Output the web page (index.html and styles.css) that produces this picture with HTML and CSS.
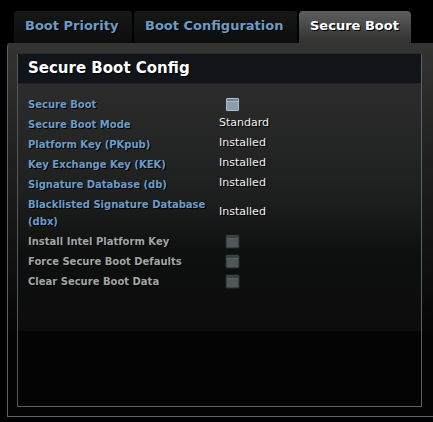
FILE: index.html
```html
<!DOCTYPE html>
<html>
<head>
<meta charset="utf-8">
<link rel="stylesheet" href="styles.css">
</head>
<body>
<div class="tabs">
  <div class="tab">Boot Priority</div>
  <div class="tab">Boot Configuration</div>
  <div class="tab active">Secure Boot</div>
</div>
<div class="panel">
  <div class="group">
    <div class="group-head">Secure Boot Config</div>
    <div class="group-body">
      <div class="row"><div class="label">Secure Boot</div><div class="value"><span class="check on"></span></div></div>
      <div class="row"><div class="label">Secure Boot Mode</div><div class="value">Standard</div></div>
      <div class="row"><div class="label">Platform Key (PKpub)</div><div class="value">Installed</div></div>
      <div class="row"><div class="label">Key Exchange Key (KEK)</div><div class="value">Installed</div></div>
      <div class="row"><div class="label">Signature Database (db)</div><div class="value">Installed</div></div>
      <div class="row tall"><div class="label">Blacklisted Signature Database (dbx)</div><div class="value">Installed</div></div>
      <div class="row dim"><div class="label">Install Intel Platform Key</div><div class="value"><span class="check"></span></div></div>
      <div class="row dim"><div class="label">Force Secure Boot Defaults</div><div class="value"><span class="check"></span></div></div>
      <div class="row dim"><div class="label">Clear Secure Boot Data</div><div class="value"><span class="check"></span></div></div>
    </div>
  </div>
</div>
</body>
</html>
```
FILE: styles.css
```css
html, body {
  margin: 0;
  padding: 0;
  background: #000;
  width: 433px;
  height: 422px;
  overflow: hidden;
  font-family: "DejaVu Sans", sans-serif;
}
.tabs {
  display: flex;
  gap: 2px;
  padding: 11px 0 0 14px;
  height: 32px;
}
.tab {
  height: 32px;
  box-sizing: border-box;
  padding: 0 0 0 11px;
  line-height: 30px;
  white-space: nowrap;
  font-weight: bold;
  font-size: 13px;
  letter-spacing: 0;
  color: #6f9bc3;
  background: linear-gradient(#161818, #0c0d0d);
  border-radius: 3px 3px 0 0;
  text-shadow: 1px 1px 0 #000;
}
.tab:nth-child(1) { width: 118px; }
.tab:nth-child(2) { width: 163px; }
.tab.active {
  width: 112px;
  color: #fff;
  background: linear-gradient(#5e5f5e, #3c3d3c 70%, #343532);
  border-radius: 4px 4px 0 0;
}
.panel {
  margin-left: 7px;
  width: 440px;
  box-sizing: border-box;
  padding: 10px 10px 9px 9px;
  background: linear-gradient(#343532 0px, #1e1f1e 120px, #0a0a0a 260px, #030403 297px);
  border-left: 1px solid #5b6267;
  border-bottom: 1px solid #5b6267;
  border-radius: 4px 0 0 0;
}
.group {
  width: 405px;
  box-sizing: border-box;
  border: 1px solid #444b50;
  border-top: 1px solid #2a2e31;
  border-left-color: #525a60;
  border-bottom-color: #5b6267;
  border-right-color: #5b6267;
  border-radius: 3px 3px 0 0;
  height: 354px;
  background: #030403;
}
.group-head {
  height: 29px;
  background: #111418;
  color: #fff;
  font-weight: bold;
  font-size: 15px;
  letter-spacing: 0;
  line-height: 29px;
  padding-left: 10px;
  text-shadow: 1px 1px 1px #000;
  border-bottom: 1px solid #1e2226;
}
.group-body {
  padding: 10px 0 40px 10px;
  background: linear-gradient(#2b2c2b, #1e1f1f 110px, #0e0f0f 170px, #0c0c0c);
}
.row {
  display: flex;
  align-items: center;
  min-height: 20px;
}
.row.tall {
  min-height: 37px;
}
.label {
  width: 191px;
  font-weight: bold;
  font-size: 10px;
  letter-spacing: 0;
  line-height: 17px;
  color: #6b9dca;
  text-shadow: 1px 1px 0 #000;
}
.row.dim .label { color: #a2a5a6; }
.value {
  font-size: 11px;
  color: #f2f2f2;
  margin-top: -3px;
  text-shadow: 1px 1px 0 #000;
  display: flex;
  align-items: center;
}
.check {
  display: block;
  width: 13px;
  height: 13px;
  margin-left: 7px;
  margin-top: 3px;
  box-sizing: border-box;
  border: 1px solid #3c4244;
  border-radius: 1px;
  background: linear-gradient(#3b4143 0 2px, #5a6163 2px 3px, #4f5658 3px);
  box-shadow: 0 0 0 1px #1a1d1e;
}
.check.on {
  border-color: #aabcc6;
  background: linear-gradient(#6f8190 0 2px, #a8bac5 2px 3px, #8a9eac 3px);
  box-shadow: 0 0 0 1px #2a3034;
}
```
